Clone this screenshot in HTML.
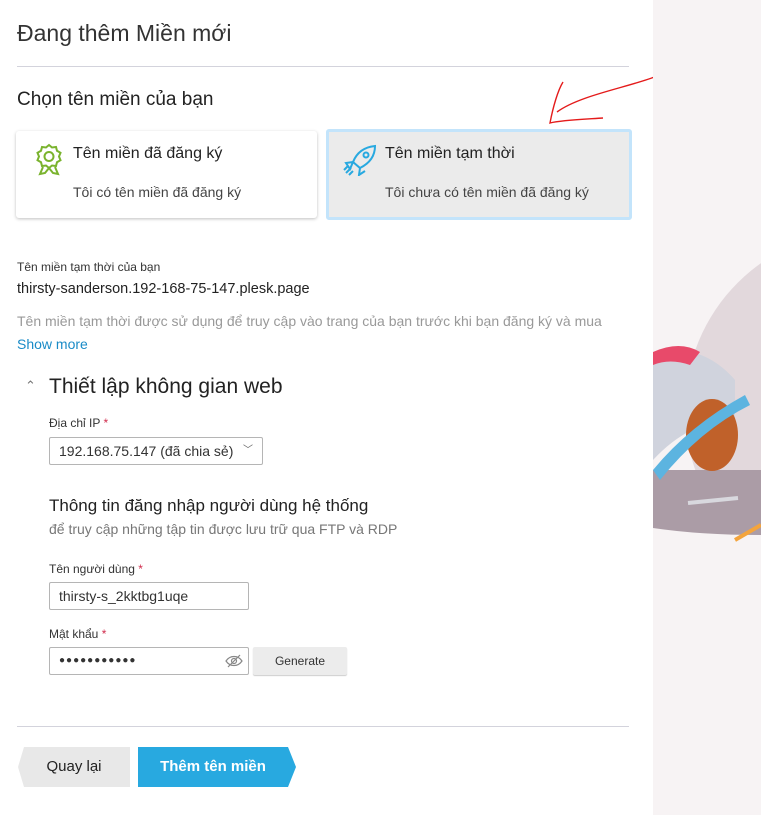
<!DOCTYPE html>
<html><head><meta charset="utf-8">
<style>
*{box-sizing:border-box;margin:0;padding:0}
body{width:761px;height:815px;overflow:hidden;background:#fff;font-family:"Liberation Sans","DejaVu Sans",sans-serif;color:#222;position:relative}
.a{position:absolute;white-space:nowrap}
.hr{position:absolute;height:1px;background:#d3d3dc}
.card{position:absolute;border-radius:3px}
.in{position:absolute;border:1px solid #b5b5b5;border-radius:2px;background:#fff;font-size:14px;padding-left:9px;line-height:26px;color:#333}
.req{color:#d02c4c}
</style></head><body>
<div class="a" style="left:17px;top:20px;font-size:23px;color:#333">Đang thêm Miền mới</div>
<div class="hr" style="left:17px;top:66px;width:612px"></div>
<div class="a" style="left:17px;top:89px;font-size:19px;color:#222">Chọn tên miền của bạn</div>

<div class="card" style="left:16px;top:131px;width:301px;height:87px;background:#fff;box-shadow:0 1px 3px rgba(0,0,0,.25)"></div>
<svg class="a" style="left:36px;top:143px" width="26" height="34" viewBox="0 0 26 34"><g fill="none" stroke="#7ab32e" stroke-width="2"><path d="M13 2l3 2.5 4-.5 1 3.8 3.5 2-1.5 3.7 1.5 3.7-3.5 2-1 3.8-4-.5-3 2.5-3-2.5-4 .5-1-3.8-3.5-2 1.5-3.7L1.5 9.8l3.5-2 1-3.8 4 .5z"/><circle cx="13" cy="13.5" r="4.5"/><path d="M7 24l-3 7 5-1 4-5M19 24l3 7-5-1-4-5"/></g></svg>
<div class="a" style="left:73px;top:145px;font-size:16px;color:#222">Tên miền đã đăng ký</div>
<div class="a" style="left:73px;top:184px;font-size:14px;color:#444">Tôi có tên miền đã đăng ký</div>

<div class="card" style="left:326px;top:129px;width:306px;height:91px;background:#ebebeb;border:3px solid #c3e4fb"></div>
<svg class="a" style="left:343px;top:144px" width="34" height="32" viewBox="0 0 34 32"><g fill="none" stroke="#28a9e0" stroke-width="2"><path d="M10 18C14 8 22 3 32 2c0 10-5 17-15 22z"/><path d="M10 18l-7 1 4 6zM17 24l-1 7 6-4"/><circle cx="23" cy="11" r="2.5"/><path d="M3 29l5-5M6 31l4-4M1 26l4-4"/></g></svg>
<div class="a" style="left:385px;top:145px;font-size:16px;color:#222">Tên miền tạm thời</div>
<div class="a" style="left:385px;top:184px;font-size:14px;color:#444">Tôi chưa có tên miền đã đăng ký</div>

<svg class="a" style="left:540px;top:70px" width="120" height="60" viewBox="0 0 120 60"><path d="M117 6C90 17 40 25 17 42M23 12c-5 8-10 25-13 41 12-3 40-4 53-5" fill="none" stroke="#e41b1b" stroke-width="1.4"/></svg>

<div class="a" style="left:17px;top:260px;font-size:12px;color:#333">Tên miền tạm thời của bạn</div>
<div class="a" style="left:17px;top:281px;font-size:14.5px;color:#222">thirsty-sanderson.192-168-75-147.plesk.page</div>
<div class="a" style="left:17px;top:313px;font-size:14px;color:#999">Tên miền tạm thời được sử dụng để truy cập vào trang của bạn trước khi bạn đăng ký và mua</div>
<div class="a" style="left:17px;top:336px;font-size:14px;color:#1a8bc7">Show more</div>

<div class="a" style="left:25px;top:378px;font-size:13px;color:#777">⌃</div>
<div class="a" style="left:49px;top:375px;font-size:21px;color:#222">Thiết lập không gian web</div>
<div class="a" style="left:49px;top:416px;font-size:12px;color:#333">Địa chỉ IP <span class="req">*</span></div>
<div class="in" style="left:49px;top:437px;width:214px;height:28px">192.168.75.147 (đã chia sẻ) <span style="position:absolute;right:9px;top:0;font-size:10px;color:#666">﹀</span></div>

<div class="a" style="left:49px;top:496px;font-size:17px;color:#222">Thông tin đăng nhập người dùng hệ thống</div>
<div class="a" style="left:49px;top:521px;font-size:14px;color:#777">để truy cập những tập tin được lưu trữ qua FTP và RDP</div>
<div class="a" style="left:49px;top:562px;font-size:12px;color:#333">Tên người dùng <span class="req">*</span></div>
<div class="in" style="left:49px;top:582px;width:200px;height:28px">thirsty-s_2kktbg1uqe</div>
<div class="a" style="left:49px;top:627px;font-size:12px;color:#333">Mật khẩu <span class="req">*</span></div>
<div class="in" style="left:49px;top:647px;width:200px;height:28px;font-size:10px;letter-spacing:1px">●●●●●●●●●●●
<svg style="position:absolute;right:5px;top:6px" width="18" height="14" viewBox="0 0 18 14"><g fill="none" stroke="#888" stroke-width="1.2"><path d="M1 7c4-6 12-6 16 0-4 6-12 6-16 0z"/><circle cx="9" cy="7" r="2.5"/><path d="M3 13L15 1"/></g></svg></div>
<div class="a" style="left:253px;top:647px;width:94px;height:28px;background:#ececec;border-radius:2px;box-shadow:0 1px 1px rgba(0,0,0,.2);font-size:12px;text-align:center;line-height:28px;color:#333">Generate</div>

<div class="hr" style="left:17px;top:726px;width:612px"></div>
<svg class="a" style="left:18px;top:747px" width="112" height="40"><polygon points="6,0 112,0 112,40 6,40 0,20" fill="#e8e8e8"/><polygon points="6,40 112,40 112,41 6,41" fill="#bbb"/></svg>
<div class="a" style="left:18px;top:747px;width:112px;line-height:40px;text-align:center;font-size:15px;color:#222">Quay lại</div>
<svg class="a" style="left:138px;top:747px" width="158" height="40"><polygon points="0,0 150,0 158,20 150,40 0,40" fill="#28a9e0"/></svg>
<div class="a" style="left:138px;top:747px;width:150px;line-height:40px;text-align:center;font-size:15px;color:#fff;font-weight:bold">Thêm tên miền</div>

<div class="a" style="left:653px;top:0;width:108px;height:815px;background:#f7f3f4;overflow:hidden">
<svg width="108" height="815" viewBox="653 0 108 815">
<defs><clipPath id="c"><rect x="653" y="0" width="108" height="472"/></clipPath></defs>
<circle cx="865" cy="410" r="180" fill="#e2d8dc" clip-path="url(#c)"/>
<path d="M653 470 L761 470 L761 535 Q700 535 653 528Z" fill="#ab9ca6"/>
<path d="M653 355 Q700 340 735 380 L735 420 Q690 420 653 460Z" fill="#d0d3dd"/>
<path d="M653 352 Q680 340 700 352 L690 365 Q670 358 653 365Z" fill="#e84a6a"/>
<ellipse cx="712" cy="435" rx="26" ry="36" fill="#c0612a"/>
<path d="M653 470 Q690 425 745 395 L750 405 Q700 430 660 480Z" fill="#5cb4e0"/>
<path d="M688 503 L738 498" stroke="#d8d8de" stroke-width="4"/>
<path d="M735 540 L761 525" stroke="#f4a43c" stroke-width="4"/>
</svg></div>
</body></html>
